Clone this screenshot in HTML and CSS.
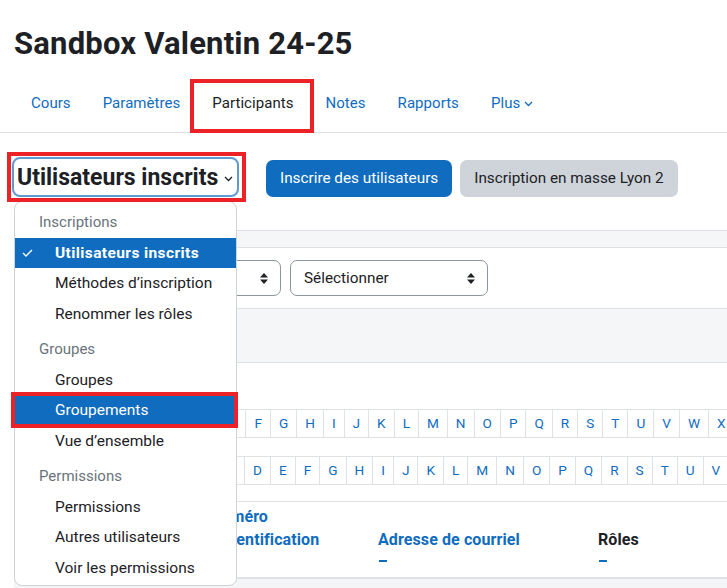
FILE: index.html
```html
<!DOCTYPE html>
<html lang="fr">
<head>
  <meta charset="UTF-8">
  <meta name="viewport" content="width=device-width, initial-scale=1.0">
  <title>Participants : Sandbox Valentin 24-25</title>
  <link rel="stylesheet" href="styles.css">
</head>
<body>
  <div class="page-header">
    <h1>Sandbox Valentin 24-25</h1>
  </div>

  <nav class="tabs">
    <a href="#">Cours</a>
    <a href="#">Paramètres</a>
    <a href="#" class="active marked">Participants</a>
    <a href="#">Notes</a>
    <a href="#">Rapports</a>
    <a href="#">Plus <svg class="caret" width="9" height="6" viewBox="0 0 9 6"><path d="M1 1l3.5 3.5L8 1" fill="none" stroke="currentColor" stroke-width="1.3"/></svg></a>
  </nav>

  <div class="tertiary">
    <div class="jump">
      <div class="jump-select marked">
        Utilisateurs inscrits
        <svg class="jump-caret" width="9" height="6" viewBox="0 0 9 6"><path d="M1 1l3.5 3.5L8 1" fill="none" stroke="#1d2125" stroke-width="1.3"/></svg>
      </div>
      <div class="menu">
        <div class="menu-header">Inscriptions</div>
        <a href="#" class="menu-item selected">
          <svg class="check" width="11" height="8" viewBox="0 0 11 8"><path d="M1 4l3 3 6-6" fill="none" stroke="#fff" stroke-width="1.4"/></svg>
          Utilisateurs inscrits
        </a>
        <a href="#" class="menu-item">Méthodes d’inscription</a>
        <a href="#" class="menu-item">Renommer les rôles</a>
        <div class="menu-divider"></div>
        <div class="menu-header">Groupes</div>
        <a href="#" class="menu-item">Groupes</a>
        <a href="#" class="menu-item hover marked">Groupements</a>
        <a href="#" class="menu-item">Vue d’ensemble</a>
        <div class="menu-divider"></div>
        <div class="menu-header">Permissions</div>
        <a href="#" class="menu-item">Permissions</a>
        <a href="#" class="menu-item">Autres utilisateurs</a>
        <a href="#" class="menu-item">Voir les permissions</a>
      </div>
    </div>
    <a href="#" class="btn btn-primary">Inscrire des utilisateurs</a>
    <a href="#" class="btn btn-secondary">Inscription en masse Lyon 2</a>
  </div>

  <div class="filters">
    <div class="filter-head"></div>
    <div class="filter-row">
      <div class="select select-join">Conditions
        <svg class="updown" width="8" height="11" viewBox="0 0 8 11"><path d="M4 0l4 4.5H0zM4 11L0 6.5h8z" fill="#1d2125"/></svg>
      </div>
      <div class="select select-type">Sélectionner
        <svg class="updown" width="8" height="11" viewBox="0 0 8 11"><path d="M4 0l4 4.5H0zM4 11L0 6.5h8z" fill="#1d2125"/></svg>
      </div>
    </div>
    <div class="filter-foot"></div>
  </div>

  <div class="initials">
    <div class="initial-row">
      <span class="initial-label first-label">Prénom</span>
      <ul class="letters">
        <li class="all">Tout</li><li>A</li><li>B</li><li>C</li><li>D</li><li>E</li><li>F</li><li>G</li><li>H</li><li>I</li><li>J</li><li>K</li><li>L</li><li>M</li><li>N</li><li>O</li><li>P</li><li>Q</li><li>R</li><li>S</li><li>T</li><li>U</li><li>V</li><li>W</li><li>X</li><li>Y</li><li>Z</li>
      </ul>
    </div>
    <div class="initial-row">
      <span class="initial-label last-label">Nom de famille</span>
      <ul class="letters">
        <li class="all">Tout</li><li>A</li><li>B</li><li>C</li><li>D</li><li>E</li><li>F</li><li>G</li><li>H</li><li>I</li><li>J</li><li>K</li><li>L</li><li>M</li><li>N</li><li>O</li><li>P</li><li>Q</li><li>R</li><li>S</li><li>T</li><li>U</li><li>V</li><li>W</li><li>X</li><li>Y</li><li>Z</li>
      </ul>
    </div>
  </div>

  <div class="participants">
    <div class="thead">
      <div class="th"><a href="#">Prénom / Nom</a><span class="dash"></span></div>
      <div class="th"><a href="#" class="narrow">Numéro d’identification</a><span class="dash"></span></div>
      <div class="th"><a href="#">Adresse de courriel</a><span class="dash"></span></div>
      <div class="th"><span class="plain">Rôles</span><span class="dash"></span></div>
    </div>
    <div class="trow"></div>
  </div>
</body>
</html>
```

FILE: styles.css
```css
body {
  margin: 0;
  font-family: Roboto, "Liberation Sans", sans-serif;
  color: #1d2125;
  background-color: #fff;
}
a {
  text-decoration: none;
}

/* annotation frames */
.marked {
  position: relative;
}
.marked::after {
  content: "";
  position: absolute;
  border: 4px solid #ec2227;
  z-index: 5;
  pointer-events: none;
}

.page-header {
  padding: 22px 14px 0;
  height: 58px;
}
.page-header h1 {
  margin: 0;
  font-size: 31px;
  line-height: 44px;
  font-weight: 700;
  letter-spacing: 0.2px;
}

.tabs {
  display: flex;
  padding-left: 15px;
  border-bottom: 1px solid #dee2e6;
}
.tabs a {
  display: flex;
  align-items: center;
  gap: 4px;
  padding: 12px 16px 18px;
  line-height: 22px;
  font-size: 15px;
  letter-spacing: 0.05px;
  color: #0f6cbf;
}
.tabs a.active {
  color: #1d2125;
}
.tabs a.marked::after {
  top: -1px;
  bottom: -1px;
  left: -6px;
  right: -4px;
}
.caret {
  margin-top: 2px;
}

.tertiary {
  display: flex;
  align-items: flex-end;
  padding: 24px 0 0 12px;
  height: 40px;
}
.jump {
  position: relative;
  margin-right: 27px;
}
.jump-select {
  display: flex;
  align-items: center;
  justify-content: space-between;
  box-sizing: border-box;
  width: 227px;
  height: 40px;
  padding: 0 4px 0 3px;
  border: 2px solid #5f9ad2;
  border-radius: 8px;
  font-size: 23px;
  font-weight: 700;
  white-space: nowrap;
}
.jump-select::after {
  top: -7px;
  bottom: -7px;
  left: -7px;
  right: -9px;
}
.jump-caret {
  margin-top: 4px;
}

.menu {
  position: absolute;
  top: 44px;
  left: 2px;
  width: 223px;
  box-sizing: border-box;
  padding: 5px 0 2px;
  background: #fff;
  border: 1px solid #cfd3d7;
  border-radius: 8px;
  z-index: 4;
}
.menu-header {
  padding: 0 24px;
  line-height: 30.5px;
  font-size: 15px;
  color: #6a737b;
}
.menu-item {
  display: block;
  position: relative;
  padding: 0 40px;
  line-height: 30.5px;
  font-size: 15.5px;
  color: #1d2125;
  white-space: nowrap;
}
.menu-item.selected {
  background: #0f6cbf;
  color: #fff;
  font-weight: 700;
  letter-spacing: 0.4px;
}
.menu-item.hover {
  background: #0f6cbf;
  color: #fff;
}
.menu-item.hover::after {
  top: -3px;
  bottom: -2px;
  left: -4px;
  right: -2px;
}
.check {
  position: absolute;
  left: 7px;
  top: 11px;
}
.menu-divider {
  height: 5px;
}

.btn {
  display: inline-block;
  height: 37px;
  line-height: 37px;
  padding: 0 14px;
  border-radius: 7px;
  font-size: 15.3px;
  white-space: nowrap;
}
.btn-primary {
  background: #0f6cbf;
  color: #fff;
  margin-right: 8px;
}
.btn-secondary {
  background: #ced4da;
  color: #1d2125;
}

.filters {
  margin-top: 33px;
  padding-left: 15px;
}
.filter-head {
  height: 16px;
  background: #f5f6f8;
  border-top: 1px solid #dee2e6;
  border-bottom: 1px solid #dee2e6;
}
.filter-row {
  display: flex;
  gap: 9px;
  padding: 12px 0 12px;
  height: 36px;
}
.select {
  display: flex;
  align-items: center;
  justify-content: space-between;
  box-sizing: border-box;
  height: 36px;
  padding: 0 12px 0 13px;
  border: 1px solid #8f959e;
  border-radius: 7px;
  font-size: 15.3px;
  color: #1d2125;
}
.select-join {
  width: 266px;
}
.select-type {
  width: 198px;
}
.filter-foot {
  height: 53px;
  background: #f5f6f8;
  border-top: 1px solid #dee2e6;
  border-bottom: 1px solid #dee2e6;
}

.initials {
  padding: 46px 0 0 14px;
}
.initial-row {
  display: flex;
  align-items: center;
  margin-bottom: 18px;
  white-space: nowrap;
}
.initial-label {
  font-size: 15px;
  margin-right: 8px;
}
.first-label {
  width: 63px;
}
.last-label {
  width: 116px;
}
.letters {
  display: flex;
  margin: 0;
  padding: 0;
  list-style: none;
}
.letters li {
  padding: 0 8px;
  margin-left: -1px;
  line-height: 27px;
  border: 1px solid #dee2e6;
  font-size: 13.6px;
  color: #0f6cbf;
}
.letters li.all {
  background: #0f6cbf;
  border-color: #0f6cbf;
  color: #fff;
}

.participants {
  padding-left: 14px;
  margin-top: -2px;
}
.thead {
  display: grid;
  grid-template-columns: 196px 168px 220px auto;
  border-top: 1px solid #dee2e6;
  border-bottom: 2px solid #dee2e6;
  padding: 4px 0 6px;
}
.th {
  display: flex;
  flex-direction: column;
  justify-content: flex-end;
  font-size: 16px;
  font-weight: 700;
  letter-spacing: 0.1px;
  line-height: 22.5px;
}
.th a {
  color: #0f6cbf;
}
.th .narrow {
  max-width: 130px;
}
.th .plain {
  color: #1d2125;
}
.dash {
  display: block;
  width: 8px;
  height: 2px;
  margin: 9px 0 9px 1px;
  background: #0f6cbf;
}
.trow {
  height: 40px;
  background: #f4f5f6;
}
```
